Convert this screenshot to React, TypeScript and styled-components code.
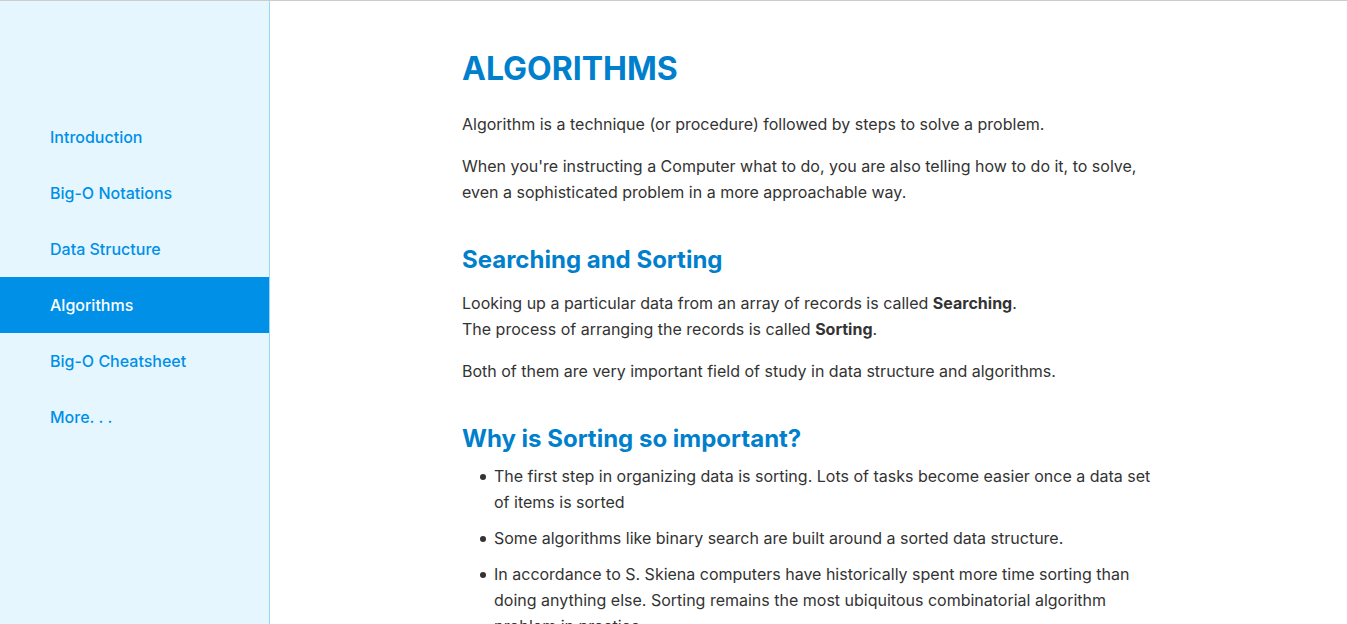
import React from "react";
import styled, { createGlobalStyle } from "styled-components";

const GlobalStyle = createGlobalStyle`
  *, *::before, *::after { box-sizing: border-box; }
  body {
    margin: 0;
    background: #fff;
    color: #333;
    font-family: Inter, "Liberation Sans", sans-serif;
    font-size: 16px;
    line-height: 26px;
  }
`;

const Layout = styled.div`
  display: flex;
  height: 100vh;
  border-top: 1px solid #ccc;
`;

const Sidebar = styled.nav`
  flex: 0 0 270px;
  padding-top: 108px;
  background: #e6f6ff;
  border-right: 1px solid #99d6f9;
`;

const NavLink = styled.a<{ $active?: boolean }>`
  display: block;
  padding: 15px 50px;
  font-weight: 500;
  text-decoration: none;
  color: ${(p) => (p.$active ? "#fff" : "#0090e7")};
  background: ${(p) => (p.$active ? "#0090e7" : "transparent")};
`;

const Main = styled.main`
  flex: 1;
  min-width: 0;
  overflow-y: auto;
  scrollbar-width: none;
`;

const Article = styled.article`
  max-width: 693px;
  margin: 0 auto;
  padding: 48px 0;
`;

const Title = styled.h1`
  margin: 0 0 22px;
  font-size: 32px;
  line-height: 40px;
  font-weight: 700;
  text-transform: uppercase;
  color: #0080cc;
`;

const Heading = styled.h2`
  margin: 39px 0 14px;
  font-size: 24px;
  line-height: 32px;
  font-weight: 700;
  color: #0080cc;
`;

const Text = styled.p`
  margin: 0 0 16px;
`;

const List = styled.ul`
  margin: -6px 0 0;
  padding-left: 18px;
  list-style: none;
`;

const Item = styled.li`
  display: flex;
  margin-bottom: 10px;

  &::before {
    content: "";
    flex: none;
    width: 6px;
    height: 6px;
    margin: 11px 8px 0 0;
    border-radius: 50%;
    background: currentColor;
  }
`;

const links = [
  "Introduction",
  "Big-O Notations",
  "Data Structure",
  "Algorithms",
  "Big-O Cheatsheet",
  "More. . .",
];

export default function App() {
  return (
    <>
      <GlobalStyle />
      <Layout>
        <Sidebar aria-label="Chapters">
          {links.map((label) => (
            <NavLink key={label} href="#" $active={label === "Algorithms"}>
              {label}
            </NavLink>
          ))}
        </Sidebar>
        <Main>
          <Article>
            <Title>Algorithms</Title>
            <Text>
              Algorithm is a technique (or procedure) followed by steps to solve
              a problem.
            </Text>
            <Text>
              When you're instructing a Computer what to do, you are also
              telling how to do it, to solve, even a sophisticated problem in a
              more approachable way.
            </Text>
            <Heading>Searching and Sorting</Heading>
            <Text>
              Looking up a particular data from an array of records is called{" "}
              <strong>Searching</strong>.
              <br />
              The process of arranging the records is called{" "}
              <strong>Sorting</strong>.
            </Text>
            <Text>
              Both of them are very important field of study in data structure
              and algorithms.
            </Text>
            <Heading>Why is Sorting so important?</Heading>
            <List>
              <Item>
                The first step in organizing data is sorting. Lots of tasks
                become easier once a data set of items is sorted
              </Item>
              <Item>
                Some algorithms like binary search are built around a sorted
                data structure.
              </Item>
              <Item>
                In accordance to S. Skiena computers have historically spent
                more time sorting than doing anything else. Sorting remains the
                most ubiquitous combinatorial algorithm problem in practice.
              </Item>
            </List>
          </Article>
        </Main>
      </Layout>
    </>
  );
}
